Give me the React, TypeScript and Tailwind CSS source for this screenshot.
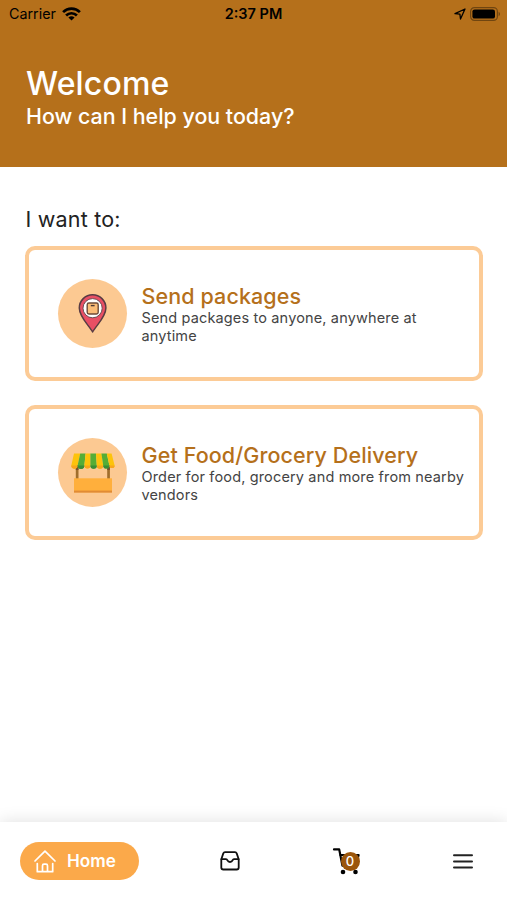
import React from 'react';

const WifiIcon: React.FC = () => (
  <svg width="19" height="14" viewBox="0 0 19 14" fill="none" stroke="#000" strokeWidth="2.7">
    <path d="M1.1 5.1A11.9 11.9 0 0 1 17.9 5.1" />
    <path d="M4.1 8.5A7.6 7.6 0 0 1 14.9 8.5" />
    <path d="M9.5 13.6L6.4 10.6A4.5 4.5 0 0 1 12.6 10.6Z" fill="#000" stroke="none" />
  </svg>
);

const LocationIcon: React.FC = () => (
  <svg width="12" height="12" viewBox="0 0 12 12" fill="none" stroke="#000" strokeWidth="1.3" strokeLinejoin="round">
    <path d="M11 1L1 5.7L5.9 6.1L6.5 11Z" />
  </svg>
);

const BatteryIcon: React.FC = () => (
  <svg width="31" height="14" viewBox="0 0 31 14">
    <rect x="0.6" y="0.6" width="26.8" height="12.8" rx="3.8" fill="none" stroke="#000" strokeOpacity="0.38" strokeWidth="1.2" />
    <rect x="2.4" y="2.4" width="22.6" height="9.2" rx="2.2" fill="#000" />
    <path d="M28.6 4.8C30.5 5.6 30.5 8.4 28.6 9.2Z" fill="#000" fillOpacity="0.4" />
  </svg>
);

const PackagePinIcon: React.FC = () => (
  <svg width="69" height="69" viewBox="0 0 69 69">
    <path
      d="M34.6 53C31 46.5 21.3 38 21.3 29A13.3 13.3 0 0 1 47.9 29C47.9 38 38.2 46.5 34.6 53Z"
      fill="#e84f64"
      stroke="#593c43"
      strokeWidth="1.5"
      strokeLinejoin="round"
    />
    <circle cx="34.6" cy="29.2" r="9.6" fill="#fff" stroke="#5d4348" strokeWidth="0.9" />
    <rect x="29.2" y="24" width="11" height="11" rx="1.7" fill="#fbbd78" stroke="#6d4b39" strokeWidth="1.4" />
    <path d="M32.8 26.6H36.6" stroke="#4d3834" strokeWidth="1.4" />
  </svg>
);

const StallIcon: React.FC = () => (
  <svg width="69" height="69" viewBox="0 0 69 69">
    <path d="M17.8 27H20.5V42H17.8ZM49.2 27H51.9V42H49.2Z" fill="#a06e2c" />
    <path d="M17.8 27H20.5V32H17.8ZM49.2 27H51.9V32H49.2Z" fill="#71522f" />
    <rect x="16" y="40.3" width="38" height="14" fill="#ffaf3c" />
    <rect x="16" y="52.6" width="38" height="2" fill="#e18b35" />
    <path d="M16 15.4H22.2L19.6 27.5A3.1 3.1 0 0 1 13.3 27.5Z" fill="#fdc30b" />
    <path d="M22.2 15.4H27.6L26.4 27.5A3.4 3.4 0 0 1 19.6 27.5Z" fill="#55ad36" />
    <path d="M27.6 15.4H32.4V27.5A3 3 0 0 1 26.4 27.5Z" fill="#fdc30b" />
    <path d="M32.4 15.4H38L38.8 27.5A3.2 3.2 0 0 1 32.4 27.5Z" fill="#55ad36" />
    <path d="M38 15.4H43.4L45.2 27.5A3.2 3.2 0 0 1 38.8 27.5Z" fill="#fdc30b" />
    <path d="M43.4 15.4H48.8L51.4 27.5A3.1 3.1 0 0 1 45.2 27.5Z" fill="#55ad36" />
    <path d="M48.8 15.4H53.6L56.6 27.5A2.6 2.6 0 0 1 51.4 27.5Z" fill="#fdc30b" />
    <path d="M13.3 27.5H19.6A3.1 3.1 0 0 1 13.3 27.5ZM26.4 27.5H32.4A3 3 0 0 1 26.4 27.5ZM38.8 27.5H45.2A3.2 3.2 0 0 1 38.8 27.5ZM51.4 27.5H56.6A2.6 2.6 0 0 1 51.4 27.5Z" fill="#f9a51d" />
    <path d="M19.6 27.5H26.4A3.4 3.4 0 0 1 19.6 27.5ZM32.4 27.5H38.8A3.2 3.2 0 0 1 32.4 27.5ZM45.2 27.5H51.4A3.1 3.1 0 0 1 45.2 27.5Z" fill="#388d36" />
  </svg>
);

const HomeIcon: React.FC = () => (
  <svg width="22" height="23" viewBox="0 0 22 23" fill="none" stroke="#fff" strokeWidth="1.7" strokeLinecap="round" strokeLinejoin="round">
    <path d="M1 11L11 1.2L21 11" />
    <path d="M3.3 13.6V21.7H18.7V13.6M8.5 21.7V15.7Q8.5 14.2 10 14.2H12Q13.5 14.2 13.5 15.7V21.7" />
  </svg>
);

const InboxIcon: React.FC = () => (
  <svg width="20" height="20" viewBox="0 0 20 20" fill="none" stroke="#111" strokeWidth="1.8" strokeLinecap="round" strokeLinejoin="round">
    <path d="M1.3 8.2L3.3 2.4Q3.8 1.2 5 1.2H15Q16.2 1.2 16.7 2.4L18.7 8.2V16.5Q18.7 18.5 16.7 18.5H3.3Q1.3 18.5 1.3 16.5Z" />
    <path d="M1.5 8.2H6Q7 8.2 7.3 9.2Q8.2 11 10 11Q11.8 11 12.7 9.2Q13 8.2 14 8.2H18.5" />
  </svg>
);

const CartIcon: React.FC = () => (
  <svg width="28" height="28" viewBox="0 0 28 28" fill="none" stroke="#000" strokeWidth="2.2" strokeLinecap="round" strokeLinejoin="round">
    <path d="M2 2.4H7.2L10.4 18.6H23.5" />
    <path d="M8.4 8H26.6L24 18" />
    <circle cx="11" cy="25" r="2.3" fill="#000" stroke="none" />
    <circle cx="23.5" cy="25" r="2.3" fill="#000" stroke="none" />
  </svg>
);

const MenuIcon: React.FC = () => (
  <svg width="22" height="18" viewBox="0 0 22 18" stroke="#222" strokeWidth="2" strokeLinecap="round">
    <path d="M2 3.2H20M2 9.4H20M2 15.6H20" />
  </svg>
);

const App: React.FC = () => {
  const services = [
    {
      title: 'Send packages',
      description: 'Send packages to anyone, anywhere at anytime',
      icon: <PackagePinIcon />
    },
    {
      title: 'Get Food/Grocery Delivery',
      description: 'Order for food, grocery and more from nearby vendors',
      icon: <StallIcon />
    }
  ];

  return (
    <div className="flex h-[900px] w-[507px] flex-col overflow-hidden bg-white font-[Inter,sans-serif]">
      <header className="h-[167px] shrink-0 bg-[#b5701b]">
        <div className="grid h-[27px] grid-cols-3 items-center text-black">
          <div className="flex items-center gap-1.5 pl-[9px]">
            <span className="text-[14.3px]">Carrier</span>
            <WifiIcon />
          </div>
          <span className="text-center text-[14.5px] font-semibold">2:37 PM</span>
          <div className="flex items-center justify-end gap-1 pr-[6px]">
            <LocationIcon />
            <BatteryIcon />
          </div>
        </div>
        <div className="pt-[37px] pl-[26px] text-white">
          <h1 className="text-[32px] leading-[39px] font-medium tracking-[0.15px]">Welcome</h1>
          <p className="text-[21.4px] leading-[26px] font-medium">How can I help you today?</p>
        </div>
      </header>

      <main className="flex-1 px-[25px] pt-[39px]">
        <h2 className="pl-[0.5px] text-[21.5px] leading-[27px] tracking-[0.2px] text-[#222]">I want to:</h2>
        <div className="mt-[13px] flex flex-col gap-6">
          {services.map((service, index) => (
            <button
              key={index}
              className="flex h-[135px] w-[458px] items-center rounded-[10px] border-4 border-[#fccb96] pl-[29px] text-left"
            >
              <div className="h-[69px] w-[69px] shrink-0 rounded-full bg-[#fcc992]">{service.icon}</div>
              <div className="ml-[14.5px] pt-px">
                <h3 className="text-[21.5px] leading-[26px] font-medium tracking-[0.1px] text-[#b5701b]">{service.title}</h3>
                <p className="w-[330px] text-[14.5px] leading-[18px] tracking-[0.15px] text-[#444]">{service.description}</p>
              </div>
            </button>
          ))}
        </div>
      </main>

      <nav className="flex h-[78px] shrink-0 items-center bg-white shadow-[0_0_16px_rgba(0,0,0,0.13)]">
        <button className="ml-[20px] flex h-[38px] w-[119px] items-center rounded-full bg-[#fba94a] pl-[14px] text-white">
          <HomeIcon />
          <span className="ml-[11px] text-[17.2px] leading-[24px] font-semibold">Home</span>
        </button>
        <button className="ml-[81px]">
          <InboxIcon />
        </button>
        <button className="relative ml-[92px]">
          <CartIcon />
          <span className="absolute top-[5px] left-[8.5px] flex h-[19px] w-[19px] items-center justify-center rounded-full bg-[#9b560c] text-[13px] font-medium text-white">
            0
          </span>
        </button>
        <button className="ml-[92px]">
          <MenuIcon />
        </button>
      </nav>
    </div>
  );
};

export default App;
